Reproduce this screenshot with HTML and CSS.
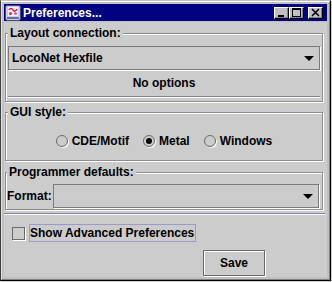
FILE: index.html
```html
<!DOCTYPE html>
<html lang="en">
<head>
    <meta charset="UTF-8">
    <title>Preferences...</title>
    <link rel="stylesheet" href="styles.css">
</head>
<body>
    <div class="window">
        <div class="frame">
            <div class="titlebar">
                <svg class="app-icon" width="16" height="16" viewBox="0 0 16 16">
                    <rect x="0.5" y="0.5" width="15" height="15" rx="2" fill="#c8cce8" stroke="#44497a"/>
                    <rect x="3" y="2" width="10" height="9" fill="#f4f4f8"/>
                    <path d="M4 5c1-2 3-2 4 0s3 1 4-1" fill="none" stroke="#d8243c" stroke-width="1.6"/>
                    <circle cx="5.5" cy="8.5" r="1.5" fill="#d8243c"/>
                    <circle cx="10.5" cy="8.5" r="1.5" fill="#e8607a"/>
                    <rect x="2" y="12" width="12" height="2" fill="#6a6f9c"/>
                </svg>
                <span class="title">Preferences...</span>
                <div class="title-buttons">
                    <span class="tbtn">
                        <svg width="13" height="10" viewBox="0 0 13 10"><rect x="3" y="7" width="6" height="2" fill="#000"/></svg>
                    </span>
                    <span class="tbtn">
                        <svg width="13" height="10" viewBox="0 0 13 10"><path d="M2 0h9v9H2z M3 2v6h7V2z" fill="#000" fill-rule="evenodd"/></svg>
                    </span>
                    <span class="tbtn close">
                        <svg width="13" height="10" viewBox="0 0 13 10"><path d="M3 1l7 7M10 1l-7 7" stroke="#000" stroke-width="1.6"/></svg>
                    </span>
                </div>
            </div>

            <div class="content">
                <fieldset class="group group-layout">
                    <legend>Layout connection:</legend>
                    <div class="combo">
                        <span class="combo-text">LocoNet Hexfile</span>
                        <span class="arrow"></span>
                    </div>
                    <div class="no-options">No options</div>
                    <div class="rule"></div>
                </fieldset>

                <fieldset class="group group-gui">
                    <legend>GUI style:</legend>
                    <div class="radios">
                        <label class="radio"><span class="radio-dot"></span>CDE/Motif</label>
                        <label class="radio"><span class="radio-dot checked"></span>Metal</label>
                        <label class="radio"><span class="radio-dot"></span>Windows</label>
                    </div>
                </fieldset>

                <fieldset class="group group-prog">
                    <legend>Programmer defaults:</legend>
                    <div class="format-row">
                        <span class="format-label">Format:</span>
                        <div class="combo combo-format">
                            <span class="combo-text"></span>
                            <span class="arrow"></span>
                        </div>
                    </div>
                </fieldset>

                <div class="rule rule-wide"></div>

                <div class="check-row">
                    <span class="checkbox"></span>
                    <span class="check-label">Show Advanced Preferences</span>
                </div>

                <div class="button-row">
                    <button class="save-button">Save</button>
                </div>
            </div>
        </div>
    </div>
</body>
</html>
```

FILE: styles.css
```css
body {
    margin: 0;
    background-color: #d4d4d4;
    font-family: "Liberation Sans", Arial, sans-serif;
    font-size: 12px;
    font-weight: bold;
    color: #000;
}
.window {
    width: 331px;
    height: 281px;
    box-sizing: border-box;
    border: 1px solid;
    border-color: #c0c0c0 #000 #000 #404040;
}
.frame {
    height: 100%;
    box-sizing: border-box;
    border: 1px solid;
    border-color: #fff #808080 #808080 #dfdfdf;
    padding: 2px;
    background-color: #c0c0c0;
    display: flex;
    flex-direction: column;
}
.titlebar {
    height: 17px;
    background-color: #000080;
    display: flex;
    align-items: center;
    padding: 0 4px 0 1px;
    flex-shrink: 0;
}
.app-icon {
    display: block;
    flex-shrink: 0;
    margin-right: 2px;
}
.title {
    color: #fff;
    font-size: 12px;
    flex-grow: 1;
}
.title-buttons {
    display: flex;
    align-items: center;
}
.tbtn {
    width: 13px;
    height: 10px;
    border: 1px solid;
    border-color: #fff #000 #000 #fff;
    box-shadow: inset -1px -1px 0 #808080;
    background-color: #c0c0c0;
}
.tbtn svg {
    display: block;
}
.tbtn.close {
    margin-left: 4px;
}
.content {
    flex-grow: 1;
    margin-top: 1px;
    background-color: #cccccc;
    padding: 4px 4px 0 1px;
}
.group {
    margin: 0;
    padding: 6px 2px 4px;
    border: 1px solid #8e8e8e;
    box-shadow: inset 1px 1px 0 #fff, 1px 1px 0 #fff;
    min-width: 0;
}
.group legend {
    padding: 0 2px;
    line-height: 14px;
    background-color: #cccccc;
}
.combo {
    height: 22px;
    border: 1px solid #7a7a7a;
    box-shadow: 1px 1px 0 #fff;
    display: flex;
    align-items: center;
    padding-left: 3px;
}
.combo-text {
    flex-grow: 1;
}
.arrow {
    width: 0;
    height: 0;
    border-left: 5px solid transparent;
    border-right: 5px solid transparent;
    border-top: 5px solid #000;
    margin-right: 5px;
}
.no-options {
    margin-top: 6px;
    line-height: 14px;
    text-align: center;
}
.rule {
    margin-top: 6px;
    height: 1px;
    background-color: #8282ac;
    box-shadow: 0 1px 0 #fff;
}
.group-gui {
    margin-top: 3px;
    padding: 15px 2px 12px;
}
.radios {
    display: flex;
    justify-content: center;
    gap: 14px;
    line-height: 14px;
}
.radio {
    display: flex;
    align-items: center;
    gap: 4px;
}
.radio-dot {
    width: 10px;
    height: 10px;
    border: 1px solid #6a6a6a;
    border-radius: 50%;
    box-shadow: 1px 1px 0 #fff;
    display: flex;
    align-items: center;
    justify-content: center;
}
.radio-dot.checked::after {
    content: "";
    width: 6px;
    height: 6px;
    border-radius: 50%;
    background-color: #000;
}
.group-prog {
    margin-top: 4px;
    padding: 5px 2px 1px 1px;
}
.format-row {
    display: flex;
    align-items: center;
}
.format-label {
    margin-right: 1px;
}
.combo-format {
    flex-grow: 1;
    margin-right: 1px;
}
.rule-wide {
    margin: 3px -2px 0 -1px;
}
.check-row {
    display: flex;
    align-items: center;
    margin: 10px 0 0 7px;
}
.checkbox {
    width: 11px;
    height: 11px;
    border: 1px solid #6a6a6a;
    box-shadow: 1px 1px 0 #fff;
    margin-right: 4px;
}
.check-label {
    border: 1px solid #9a9acc;
    line-height: 16px;
    padding-right: 1px;
}
.button-row {
    display: flex;
    margin-top: 8px;
    padding-left: 198px;
}
.save-button {
    width: 62px;
    height: 26px;
    font-family: "Liberation Sans", Arial, sans-serif;
    font-size: 12px;
    font-weight: bold;
    background-color: #cccccc;
    border: 1px solid #6a6a6a;
    box-shadow: 1px 1px 0 #fff, inset 1px 1px 0 #fff;
    padding: 0;
    color: #000;
}
```
